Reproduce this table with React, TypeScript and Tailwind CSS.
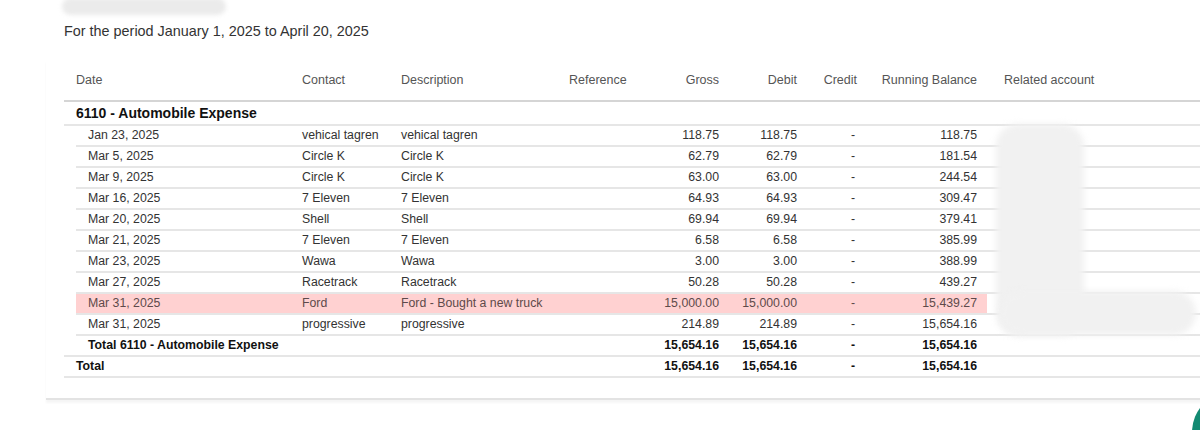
import React from 'react'

type Row = {
  date: string
  contact?: string
  desc?: string
  gross: string
  debit: string
  balance: string
  kind: 'item' | 'subtotal' | 'total'
  flagged?: boolean
}

const rows: Row[] = [
  { date: 'Jan 23, 2025', contact: 'vehical tagren', desc: 'vehical tagren', gross: '118.75', debit: '118.75', balance: '118.75', kind: 'item' },
  { date: 'Mar 5, 2025', contact: 'Circle K', desc: 'Circle K', gross: '62.79', debit: '62.79', balance: '181.54', kind: 'item' },
  { date: 'Mar 9, 2025', contact: 'Circle K', desc: 'Circle K', gross: '63.00', debit: '63.00', balance: '244.54', kind: 'item' },
  { date: 'Mar 16, 2025', contact: '7 Eleven', desc: '7 Eleven', gross: '64.93', debit: '64.93', balance: '309.47', kind: 'item' },
  { date: 'Mar 20, 2025', contact: 'Shell', desc: 'Shell', gross: '69.94', debit: '69.94', balance: '379.41', kind: 'item' },
  { date: 'Mar 21, 2025', contact: '7 Eleven', desc: '7 Eleven', gross: '6.58', debit: '6.58', balance: '385.99', kind: 'item' },
  { date: 'Mar 23, 2025', contact: 'Wawa', desc: 'Wawa', gross: '3.00', debit: '3.00', balance: '388.99', kind: 'item' },
  { date: 'Mar 27, 2025', contact: 'Racetrack', desc: 'Racetrack', gross: '50.28', debit: '50.28', balance: '439.27', kind: 'item' },
  { date: 'Mar 31, 2025', contact: 'Ford', desc: 'Ford - Bought a new truck', gross: '15,000.00', debit: '15,000.00', balance: '15,439.27', kind: 'item', flagged: true },
  { date: 'Mar 31, 2025', contact: 'progressive', desc: 'progressive', gross: '214.89', debit: '214.89', balance: '15,654.16', kind: 'item' },
  { date: 'Total 6110 - Automobile Expense', gross: '15,654.16', debit: '15,654.16', balance: '15,654.16', kind: 'subtotal' },
  { date: 'Total', gross: '15,654.16', debit: '15,654.16', balance: '15,654.16', kind: 'total' },
]

function LedgerRow({ row }: { row: Row }) {
  const item = row.kind === 'item'
  const bold = !item
  const bg = row.flagged ? 'bg-[#ffd1d1]' : ''
  const text = row.flagged ? 'text-[#5e4a4a]' : bold ? 'text-[#111] font-bold' : 'text-[#333]'

  return (
    <div
      className={`flex h-[21px] items-center border-b-2 border-[#e6e6e6] text-[12.3px] ${text} ${item ? 'ml-[12px]' : ''}`}
    >
      <div className={`flex h-full items-center ${bg} ${item ? 'w-[214px] pl-3' : row.kind === 'subtotal' ? 'w-[226px] pl-6' : 'w-[226px] pl-3'} whitespace-nowrap`}>
        {row.date}
      </div>
      <div className={`flex h-full w-[99px] items-center pl-3 ${bg}`}>{row.contact}</div>
      <div className={`flex h-full w-[168px] items-center pl-3 ${bg}`}>{row.desc}</div>
      <div className={`h-full w-[96px] ${bg}`} />
      <div className={`flex h-full w-[78px] items-center justify-end pr-3 ${bg}`}>{row.gross}</div>
      <div className={`flex h-full w-[78px] items-center justify-end pr-3 ${bg}`}>{row.debit}</div>
      <div className={`flex h-full w-[60px] items-center justify-end pr-[14px] ${bg}`}>-</div>
      <div className={`flex h-full w-[118px] items-center justify-end pr-[10px] ${bg}`}>{row.balance}</div>
      <div className="flex-1" />
    </div>
  )
}

export default function App() {
  return (
    <div className="relative h-[430px] w-[1200px] overflow-hidden bg-white font-['Liberation_Sans',Arial,sans-serif]">
      {/* redacted report title */}
      <div className="absolute left-[62px] top-[-2px] h-[17px] w-[164px] rounded-full bg-[#ebebeb] blur-[2px]" />

      {/* teal button peeking in at the corner */}
      <div className="absolute left-[1192px] top-[392px] h-[80px] w-[80px] rounded-full bg-[#128a72]" />

      <p className="pl-[64px] pt-[23px] text-[14.4px] leading-[17px] text-[#333]">
        For the period January 1, 2025 to April 20, 2025
      </p>

      <div className="relative ml-[46px] mt-[20px] w-[1200px] border-b-2 border-[#e3e3e3] bg-white pb-[20px] pl-[18px] shadow-[0_3px_2px_rgba(0,0,0,0.04)]">
        {/* header */}
        <div className="flex h-[42px] items-center border-b-2 border-[#d5d5d5] text-[12.5px] text-[#555]">
          <div className="w-[226px] pl-3">Date</div>
          <div className="w-[99px] pl-3">Contact</div>
          <div className="w-[168px] pl-3">Description</div>
          <div className="w-[96px] pl-3 whitespace-nowrap">Reference</div>
          <div className="w-[78px] pr-3 text-right">Gross</div>
          <div className="w-[78px] pr-3 text-right">Debit</div>
          <div className="w-[60px] pr-3 text-right">Credit</div>
          <div className="w-[120px] pr-3 text-right whitespace-nowrap">Running Balance</div>
          <div className="flex-1 pl-[15px]">Related account</div>
        </div>

        {/* account group */}
        <div className="flex h-[24px] items-center border-b-2 border-[#e6e6e6] pl-3 pt-[1px] text-[14px] font-bold text-[#111]">
          6110 - Automobile Expense
        </div>

        {rows.map((r, i) => (
          <LedgerRow key={i} row={r} />
        ))}
      </div>

      {/* redacted related accounts */}
      <div className="absolute left-[996px] top-[124px] h-[212px] w-[88px] rounded-[22px] bg-[#f1f1f1] blur-[3px]" />
      <div className="absolute left-[1000px] top-[291px] h-[44px] w-[196px] rounded-[22px] bg-[#f1f1f1] blur-[3px]" />
    </div>
  )
}
